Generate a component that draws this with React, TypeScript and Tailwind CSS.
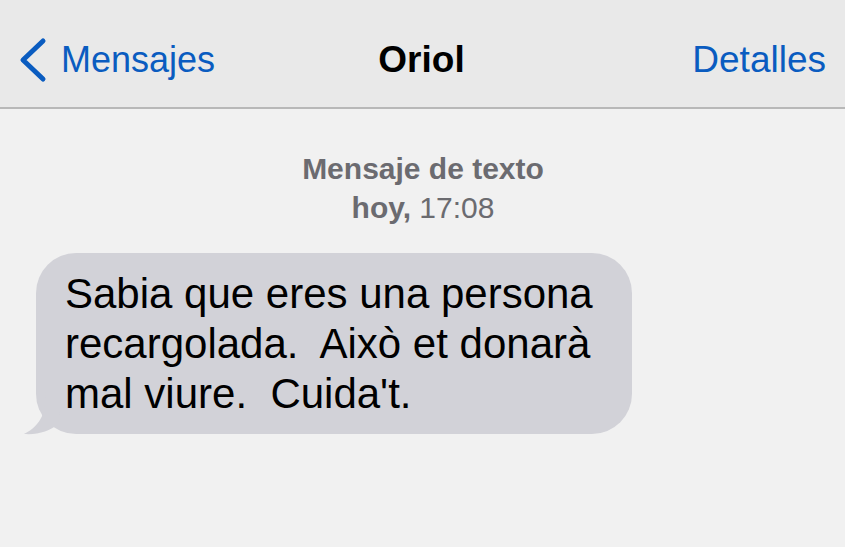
const App = () => {
    return (
        <div className="w-[845px] h-[547px] bg-[#f1f1f1] overflow-hidden" style={{ fontFamily: '"Liberation Sans", Arial, sans-serif' }}>
            {/* Barra de navegació */}
            <div className="h-[109px] bg-[#e9e9e9] border-b-2 border-[#b8b8b8] flex items-center justify-between pl-[17px] pr-[19px] pt-[12px]">
                <div className="flex items-center gap-[14px] text-[#0a5cc0] w-[260px]">
                    <svg width="30" height="46" viewBox="0 0 30 46">
                        <path d="M26 4 L6 23 L26 42" fill="none" stroke="currentColor" strokeWidth="5" strokeLinecap="round" strokeLinejoin="round" />
                    </svg>
                    <span className="text-[36px]">Mensajes</span>
                </div>
                <span className="text-[37px] font-bold text-black">Oriol</span>
                <div className="w-[260px] flex justify-end">
                    <span className="text-[37px] text-[#0a5cc0]">Detalles</span>
                </div>
            </div>

            {/* Capçalera de la conversa */}
            <div className="flex flex-col items-center pt-[40px] pl-[1px] text-[#6b6b70] text-[30px] leading-[39px]">
                <span className="font-bold">Mensaje de texto</span>
                <span><span className="font-bold">hoy,</span> 17:08</span>
            </div>

            {/* Bombolla */}
            <div className="pl-[36px] pt-[26px]">
                <div className="relative w-[596px] bg-[#d2d2d8] rounded-[40px] pl-[29px] pr-[10px] pt-[16px] pb-[15px]">
                    <svg className="absolute left-[-14px] bottom-[-1px]" width="40" height="44" viewBox="0 0 40 44">
                        <path d="M24 0 C24 20 20 34 2 43 C16 44 28 40 36 33 L40 0 Z" fill="#d2d2d8" />
                    </svg>
                    <p className="relative text-[42px] leading-[50px] text-black whitespace-nowrap">
                        Sabia que eres una persona<br />
                        recargolada.&nbsp; Això et donarà<br />
                        mal viure.&nbsp; Cuida't.
                    </p>
                </div>
            </div>
        </div>
    );
};

export default App;
